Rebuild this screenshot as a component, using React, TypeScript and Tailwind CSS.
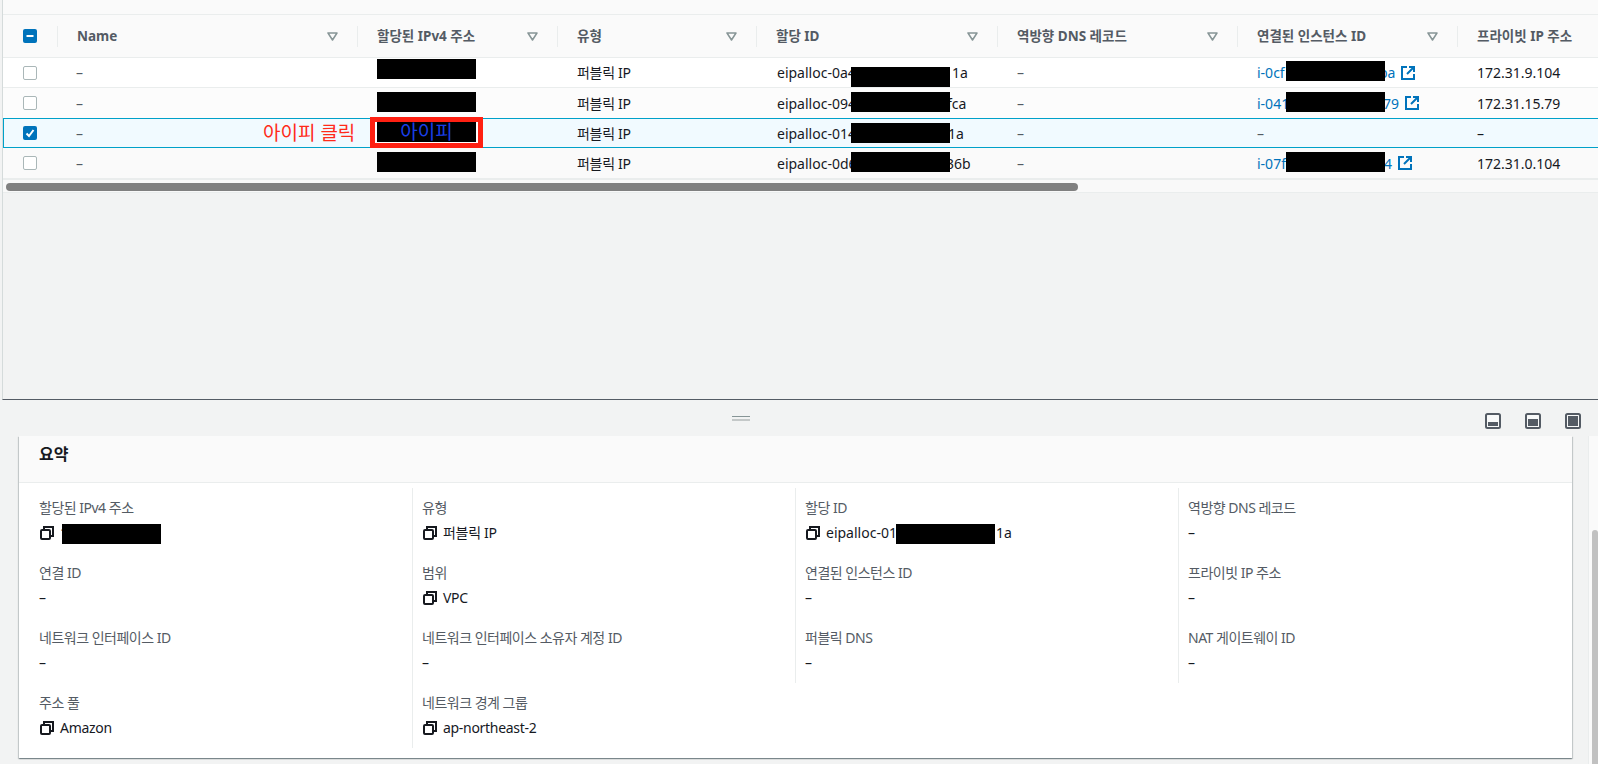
import React from 'react';

const columns = ['Name', '할당된 IPv4 주소', '유형', '할당 ID', '역방향 DNS 레코드', '연결된 인스턴스 ID', '프라이빗 IP 주소'];

const rows = [
  {
    rowClass: 'bg-white border-b border-[#eaeded]',
    ipBox: 'top-px',
    alloc: 'eipalloc-0a4',
    allocGap: 'w-[175px]',
    allocEnd: '1a',
    allocBox: 'top-[9px]',
    instance: 'i-0cf',
    instanceGap: 'w-[122px]',
    instanceEnd: 'ba',
    instanceBox: 'top-[3px]',
    privateIp: '172.31.9.104',
  },
  {
    rowClass: 'bg-[#fcfcfc]',
    ipBox: 'top-[4px]',
    alloc: 'eipalloc-094',
    allocGap: 'w-[170px]',
    allocEnd: 'fca',
    allocBox: 'top-[4px]',
    instance: 'i-041',
    instanceGap: 'w-[126px]',
    instanceEnd: '79',
    instanceBox: 'top-[4px]',
    privateIp: '172.31.15.79',
  },
  {
    rowClass: 'bg-[#f1faff] border-y border-[#00a1c9] shadow-[inset_1px_0_0_#00a1c9]',
    selected: true,
    alloc: 'eipalloc-014',
    allocGap: 'w-[171px]',
    allocEnd: '1a',
    allocBox: 'top-[4px]',
    privateIp: '–',
  },
  {
    rowClass: 'bg-[#fafafa]',
    ipBox: 'top-[4px]',
    alloc: 'eipalloc-0d6',
    allocGap: 'w-[169px]',
    allocEnd: '36b',
    allocBox: 'top-[4px]',
    instance: 'i-07f',
    instanceGap: 'w-[127px]',
    instanceEnd: '4',
    instanceBox: 'top-[4px]',
    privateIp: '172.31.0.104',
  },
];

const FilterIcon = () => (
  <svg width="11" height="9" viewBox="0 0 11 9" className="ml-auto mr-[20px] shrink-0">
    <path d="M1 1h9L5.5 8z" fill="#fafafa" stroke="#879596" strokeWidth="1.5" strokeLinejoin="round" />
  </svg>
);

const Checkbox = ({ state }: { state?: 'checked' | 'mixed' }) => {
  if (!state) {
    return <span className="ml-[20px] block h-[14px] w-[14px] rounded-[2px] border border-[#aab7b8] bg-white" />;
  }
  return (
    <span className="ml-[20px] flex h-[14px] w-[14px] items-center justify-center rounded-[2px] bg-[#0073bb]">
      <svg width="12" height="12" viewBox="0 0 12 12" fill="none" stroke="white" strokeWidth="2">
        {state === 'checked' ? <path d="M2.5 6.5 5 9l4.5-6" /> : <path d="M2.5 6h7" />}
      </svg>
    </span>
  );
};

const ExternalIcon = () => (
  <svg width="14" height="14" viewBox="0 0 14 14" fill="none" stroke="#0073bb" strokeWidth="2" className="ml-[6px] shrink-0">
    <path d="M6 1H1v12h12V8" />
    <path d="M8 1h5v5M12.5 1.5 6 8" />
  </svg>
);

const CopyIcon = () => (
  <svg width="14" height="14" viewBox="0 0 14 14" fill="none" stroke="#16191f" strokeWidth="2" className="ml-px shrink-0">
    <rect x="1" y="4" width="9" height="9" rx="1" />
    <path d="M4 4V1h9v9h-3" />
  </svg>
);

const PanelIcon = ({ fillY }: { fillY: number }) => (
  <svg width="16" height="16" viewBox="0 0 16 16">
    <rect x="1" y="1" width="14" height="14" rx="1.5" fill="#f8f9f9" stroke="#545b64" strokeWidth="2" />
    <rect x="3" y={fillY} width="10" height={13 - fillY} fill="#545b64" />
  </svg>
);

const Redact = ({ className }: { className: string }) => (
  <span className={`absolute block h-[20px] w-[99px] bg-black ${className}`} />
);

type FieldData = { label: string; value?: string; copy?: boolean; redact?: boolean; alloc?: boolean };

const summary: FieldData[][] = [
  [
    { label: '할당된 IPv4 주소', copy: true, redact: true },
    { label: '연결 ID' },
    { label: '네트워크 인터페이스 ID' },
    { label: '주소 풀', value: 'Amazon', copy: true },
  ],
  [
    { label: '유형', value: '퍼블릭 IP', copy: true },
    { label: '범위', value: 'VPC', copy: true },
    { label: '네트워크 인터페이스 소유자 계정 ID' },
    { label: '네트워크 경계 그룹', value: 'ap-northeast-2', copy: true },
  ],
  [
    { label: '할당 ID', copy: true, alloc: true },
    { label: '연결된 인스턴스 ID' },
    { label: '퍼블릭 DNS' },
  ],
  [
    { label: '역방향 DNS 레코드' },
    { label: '프라이빗 IP 주소' },
    { label: 'NAT 게이트웨이 ID' },
  ],
];

const Field = ({ field }: { field: FieldData }) => (
  <div className="h-[65px] pt-[10px]">
    <div className="h-[20px] leading-[20px] tracking-[-0.5px] text-[#545b64]">{field.label}</div>
    <div className="relative mt-[2px] flex h-[25px] items-center gap-[6px] tracking-[-0.3px] text-[#16191f]">
      {field.copy && <CopyIcon />}
      {field.redact && (
        <>
          <span>1</span>
          <Redact className="left-[23px] top-[4px]" />
        </>
      )}
      {field.alloc && (
        <>
          <span className="inline-block w-[170px] overflow-hidden whitespace-nowrap tracking-normal">eipalloc-01</span>
          <span className="-ml-[6px] tracking-normal">1a</span>
          <Redact className="left-[91px] top-[4px]" />
        </>
      )}
      {!field.redact && !field.alloc && (field.value ?? '–')}
    </div>
  </div>
);

export default function App() {
  return (
    <div className="flex h-screen flex-col overflow-hidden bg-[#f2f3f3] font-['Noto_Sans','Noto_Sans_CJK_KR',sans-serif] text-[14px] text-[#16191f]">
      {/* upper panel: table */}
      <div className="ml-[2px] flex h-[400px] shrink-0 flex-col border-b border-l border-b-[#545b64] border-l-[#d5dbdb]">
        <div className="h-[15px] shrink-0 border-b border-[#eaeded] bg-[#fafafa]" />
        <div className="grid h-[43px] shrink-0 grid-cols-[55px_300px_200px_199px_241px_240px_220px_140px] items-center border-b border-[#eaeded] bg-[#fafafa]">
          <Checkbox state="mixed" />
          {columns.map((col, i) => (
            <div key={col} className="flex items-center">
              <span className="-ml-px h-[21px] w-px bg-[#eaeded]" />
              <span className="ml-[19px] whitespace-nowrap font-bold text-[13.5px] text-[#545b64]">{col}</span>
              {i < 6 && <FilterIcon />}
            </div>
          ))}
        </div>

        {rows.map((row) => (
          <div
            key={row.alloc}
            className={`grid h-[30px] shrink-0 grid-cols-[55px_300px_200px_199px_241px_240px_220px_140px] items-center ${row.rowClass}`}
          >
            <Checkbox state={row.selected ? 'checked' : undefined} />
            <div className="relative flex h-full items-center pl-[18px] text-[#545b64]">
              –
              {row.selected && (
                <span className="absolute left-[205px] top-0 whitespace-nowrap text-[19px] leading-[28px] text-[#ff2a1a]">아이피 클릭</span>
              )}
            </div>
            <div className="relative h-full">
              {row.selected ? (
                <div className="absolute left-[12px] top-[-2px] h-[31px] w-[113px] border-[5px] border-[#ff2012] bg-white">
                  <div className="ml-[2px] flex h-[20px] w-[99px] items-center justify-center bg-black text-[19px] text-[#1a3fe8]">
                    아이피
                  </div>
                </div>
              ) : (
                <Redact className={`left-[19px] ${row.ipBox}`} />
              )}
            </div>
            <div className="pl-[19px] tracking-[-0.3px]">퍼블릭 IP</div>
            <div className="relative flex h-full items-center pl-[20px]">
              <span className={`inline-block overflow-hidden whitespace-nowrap ${row.allocGap}`}>{row.alloc}</span>
              <span className="whitespace-nowrap">{row.allocEnd}</span>
              <Redact className={`left-[94px] ${row.allocBox}`} />
            </div>
            <div className="pl-[19px] text-[#545b64]">–</div>
            <div className="relative flex h-full items-center pl-[19px]">
              {row.instance ? (
                <>
                  <span className={`inline-block overflow-hidden whitespace-nowrap text-[#0073bb] ${row.instanceGap}`}>{row.instance}</span>
                  <span className="whitespace-nowrap text-[#0073bb]">{row.instanceEnd}</span>
                  <ExternalIcon />
                  <Redact className={`left-[48px] ${row.instanceBox}`} />
                </>
              ) : (
                <span className="text-[#545b64]">–</span>
              )}
            </div>
            <div className="pl-[19px]">{row.privateIp}</div>
          </div>
        ))}

        <div className="h-[15px] shrink-0 border-b border-t-2 border-[#eaeded] bg-[#f9f9f9] pl-[3px] pt-[3px]">
          <div className="h-[8px] w-[1072px] rounded-[4px] bg-[#808080]" />
        </div>
      </div>

      {/* split bar */}
      <div className="flex h-[36px] shrink-0 items-start pl-[732px] pr-[17px]">
        <div className="flex w-[18px] flex-col gap-[2px] pt-[16px]">
          <span className="h-px bg-[#879596]" />
          <span className="h-[2px] bg-[#c4c8c8]" />
        </div>
        <div className="ml-auto flex gap-[24px] pt-[13px]">
          <PanelIcon fillY={9} />
          <PanelIcon fillY={6} />
          <PanelIcon fillY={3} />
        </div>
      </div>

      {/* lower panel: summary */}
      <div className="flex min-h-0 flex-1">
        <div className="ml-[19px] mr-[16px] h-[322px] flex-1 bg-white shadow-[0_1px_1px_0_rgba(0,28,36,0.3),1px_1px_1px_0_rgba(0,28,36,0.15),-1px_1px_1px_0_rgba(0,28,36,0.15)]">
          <div className="flex h-[47px] items-center border-b border-[#eaeded] bg-[#fafafa] pb-[10px] pl-[20px] text-[16px] font-bold">요약</div>
          <div className="grid grid-cols-[393px_383px_383px_1fr] items-start pt-[5px]">
            {summary.map((col, i) => (
              <div key={col[0].label} className={i === 0 ? 'pl-[20px]' : 'border-l border-[#eaeded] pl-[9px]'}>
                {col.map((field) => (
                  <Field key={field.label} field={field} />
                ))}
              </div>
            ))}
          </div>
        </div>
        <div className="w-[10px] shrink-0 border-l border-[#eaeded] bg-[#fafafa] pt-[94px]">
          <div className="ml-auto h-[300px] w-[6px] rounded-t-[3px] bg-[#c1c1c1]" />
        </div>
      </div>
    </div>
  );
}
